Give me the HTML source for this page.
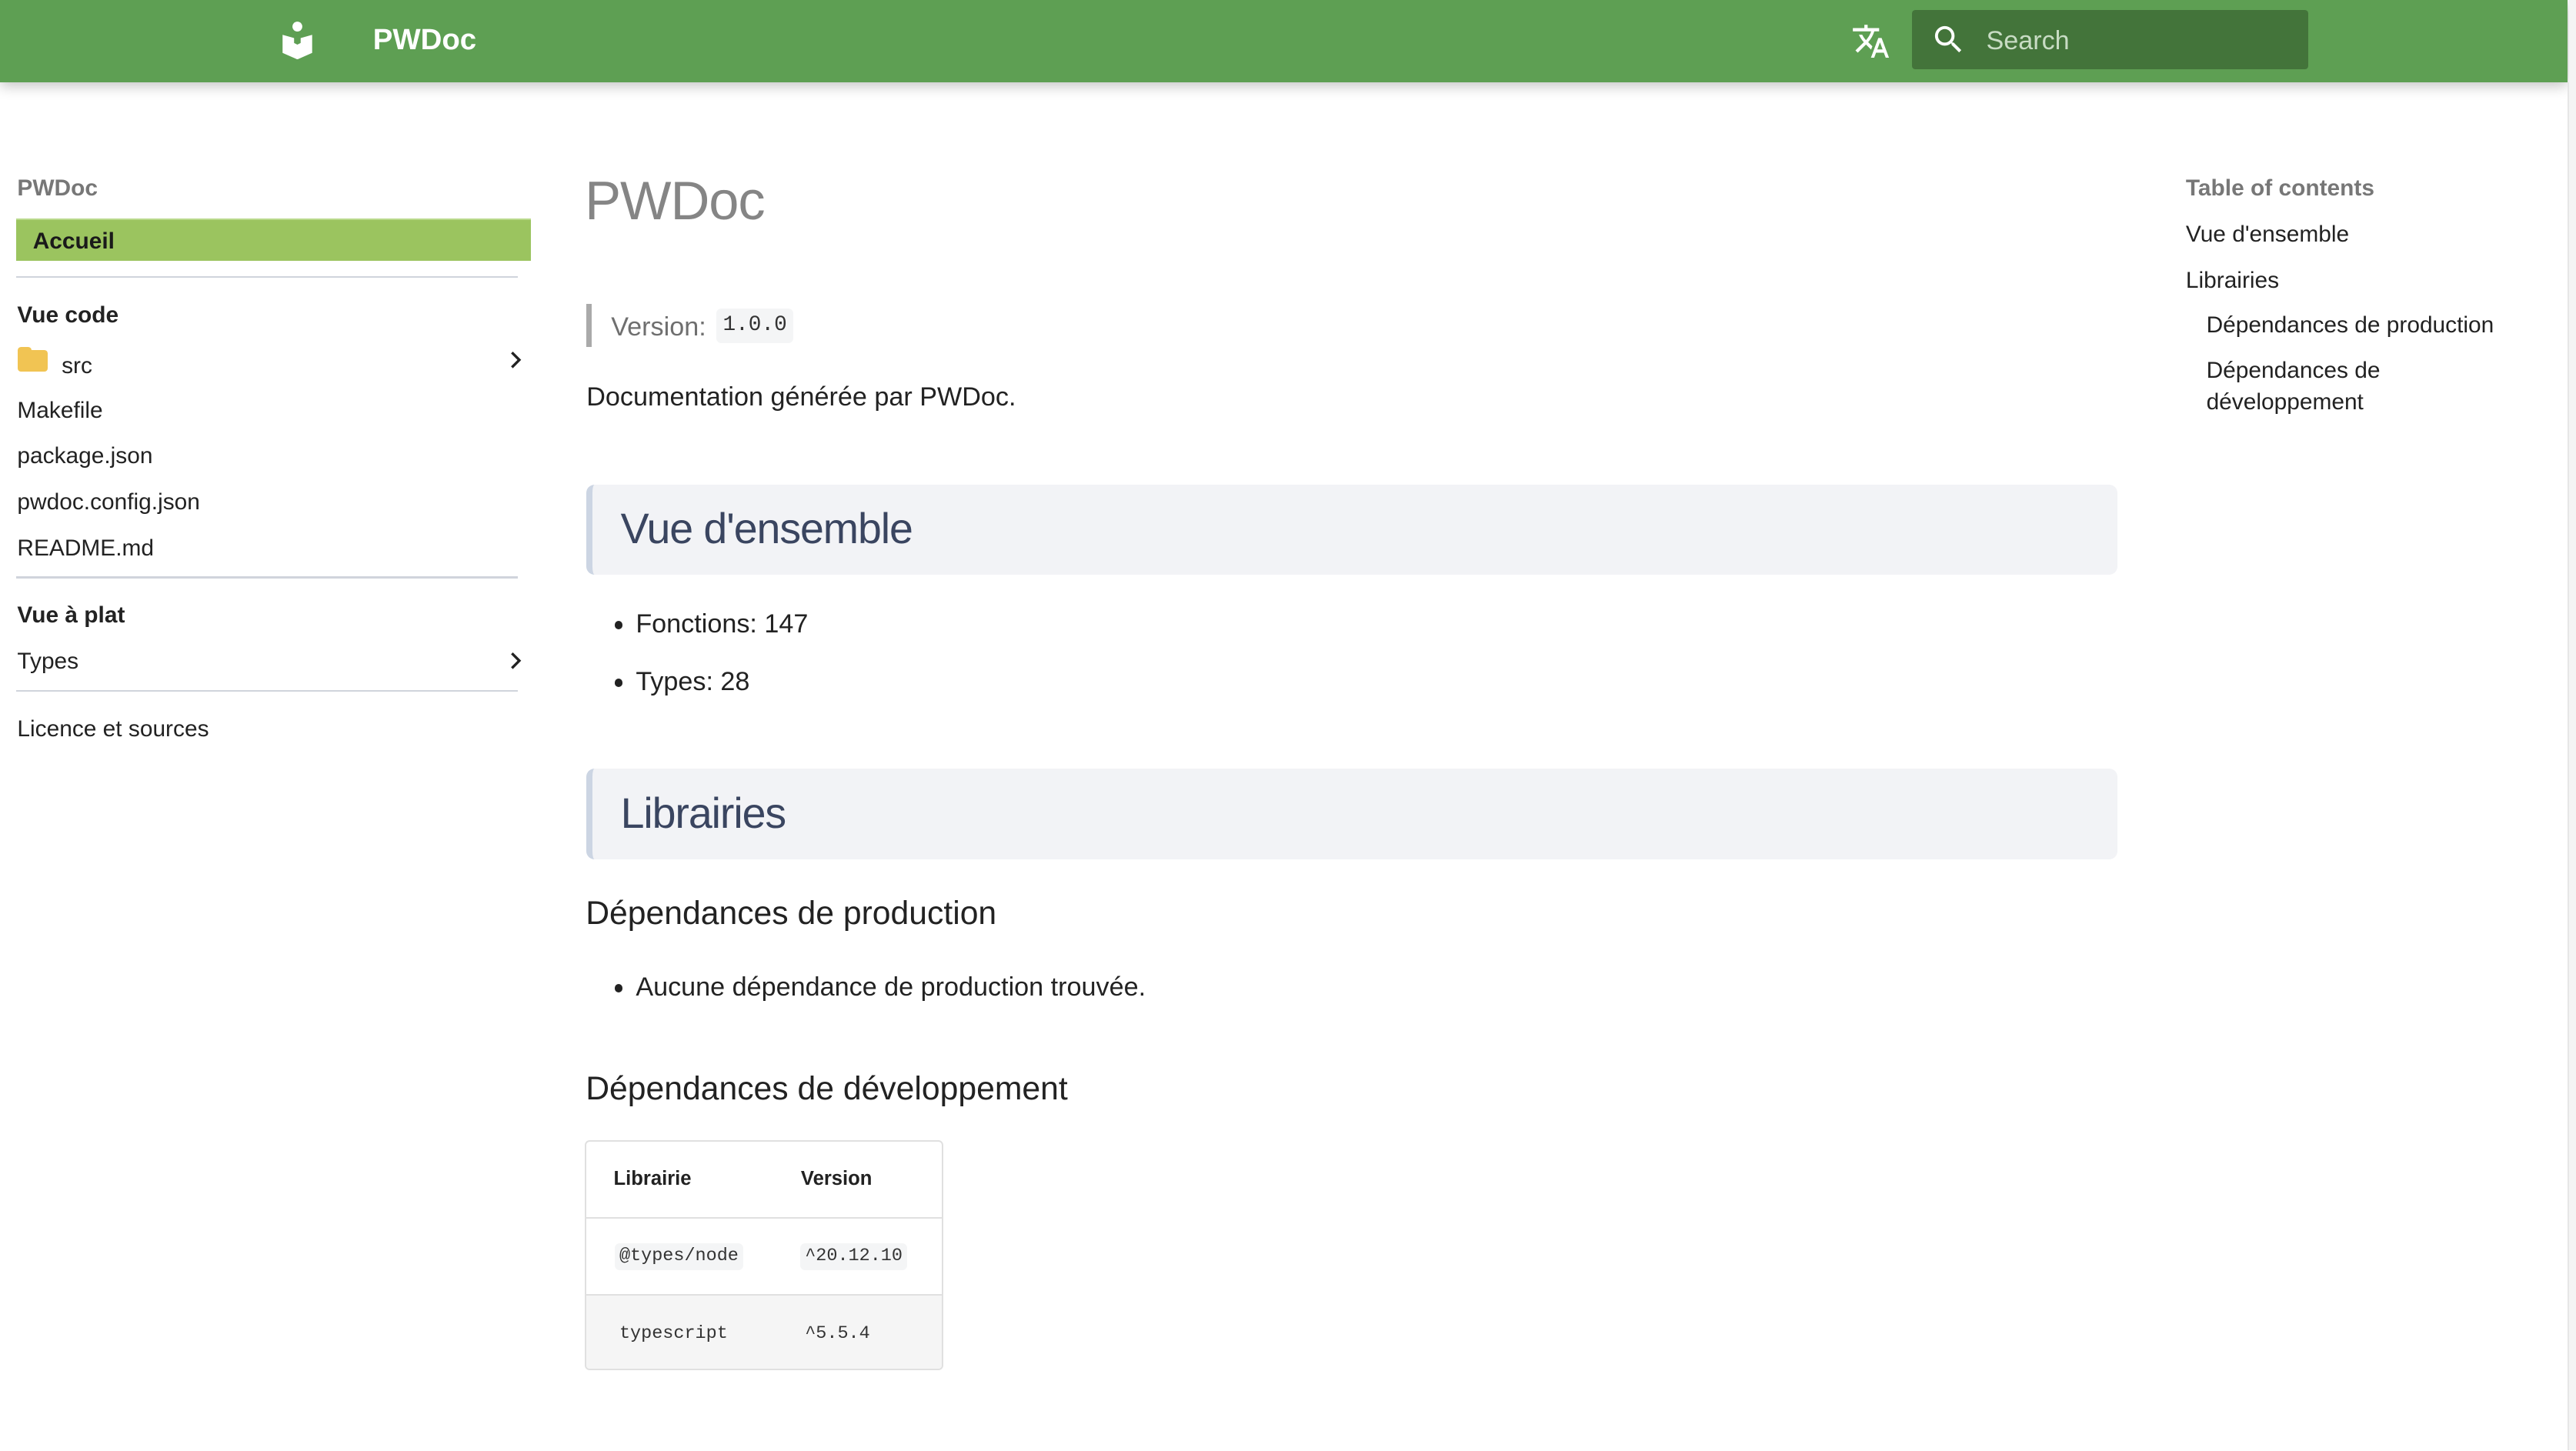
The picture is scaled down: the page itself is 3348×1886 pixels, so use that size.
<!DOCTYPE html>
<html><head><meta charset="utf-8"><style>
html{zoom:2.1352}
body{margin:0;width:1568px;height:883px;position:relative;overflow:hidden;background:#fff;font-family:"Liberation Sans",sans-serif;color:#222}
.a{position:absolute;white-space:nowrap}
.hdr{position:absolute;left:0;top:0;width:1563px;height:50px;background:#5e9f53;box-shadow:0 2px 8px rgba(0,0,0,.25)}
.sb{font-size:14px;line-height:18px}
.t{font-size:14px;line-height:18px;color:#222}
.line{position:absolute;left:10px;width:305px;height:1px;background:#d0d4dc}
.box{position:absolute;left:357px;width:932px;height:55px;background:#f2f3f6;border-left:4px solid #ccd5e3;border-radius:5px;box-sizing:border-box}
.box span{position:absolute;left:17px;top:12px;font-size:26px;font-weight:300;color:#3a4560;letter-spacing:-0.5px}
.li{font-size:16px;line-height:20px;color:#222}
.dot{position:absolute;width:5px;height:5px;border-radius:50%;background:#222}
.mono{font-family:"Liberation Mono",monospace;color:#333}
</style></head><body>
<div class="hdr">
 <svg class="a" style="left:170px;top:12px" width="22" height="24" viewBox="0 0 22 24"><circle cx="11" cy="4" r="3" fill="#fff"/><path d="M2 9 L9 11 L9 14 L11 15 L13 14 L13 11 L20 9 L20 20 L11 24 L2 20 Z" fill="#fff"/></svg>
 <div class="a" style="left:227px;top:14px;font-size:18px;font-weight:bold;color:#fff">PWDoc</div>
 <svg class="a" style="left:1127px;top:13px" width="24" height="24" viewBox="0 0 24 24"><path fill="#fff" d="M12.87 15.07l-2.54-2.51.03-.03A17.52 17.52 0 0 0 14.070 6H17V4h-7V2H8v2H1v2h11.17C11.5 7.92 10.44 9.75 9 11.35 8.07 10.32 7.3 9.19 6.69 8h-2c.73 1.63 1.730 3.17 2.98 4.56l-5.09 5.02L4 19l5-5 3.11 3.11.76-2.04zM18.5 10h-2L12 22h2l1.12-3h4.75L21 22h2l-4.5-12zm-2.62 7l1.62-4.33L19.12 17h-3.24z"/></svg>
 <div class="a" style="left:1164px;top:6px;width:241px;height:36px;background:#43743a;border-radius:2px"></div>
 <svg class="a" style="left:1175px;top:13px" width="22" height="22" viewBox="0 0 24 24"><path fill="#fff" d="M15.5 14h-.79l-.28-.27A6.47 6.47 0 0 0 16 9.5 6.5 6.5 0 1 0 9.5 16c1.61 0 3.09-.59 4.230-1.57l.27.28v.79l5 4.99L20.49 19l-4.99-5zm-6 0C7.01 14 5 11.99 5 9.5S7.01 5 9.5 5 14 7.01 14 9.5 11.99 14 9.5 14z"/></svg>
 <div class="a" style="left:1209px;top:16px;font-size:16px;color:#c8dcc4">Search</div>
</div>
<div class="a" style="left:1563px;top:50px;width:1px;height:833px;background:#e6e6e6"></div>
<div class="a" style="left:1564px;top:0;width:4px;height:883px;background:#f4f4f4"></div>

<div class="a sb" style="left:10.5px;top:106px;font-weight:bold;color:#777">PWDoc</div>
<div class="a" style="left:10px;top:133px;width:313px;height:26px;background:#9bc45f;border-top:1px solid #b9d98c;box-sizing:border-box"></div>
<div class="a sb" style="left:20px;top:138px;font-weight:bold;color:#1a1a1a">Accueil</div>
<div class="line" style="top:168px"></div>
<div class="a sb" style="left:10.5px;top:183px;font-weight:bold">Vue code</div>
<div class="a" style="left:11px;top:213px;width:18px;height:13px;background:#f1c453;border-radius:2px"></div>
<div class="a" style="left:11px;top:211px;width:8px;height:4px;background:#f1c453;border-radius:2px 2px 0 0"></div>
<div class="a t" style="left:37.5px;top:214px">src</div>
<svg class="a" style="left:309px;top:213px" width="10" height="12" viewBox="0 0 10 12"><path d="M2.5 1.5 L7 6 L2.5 10.5" stroke="#222" stroke-width="1.6" fill="none"/></svg>
<div class="a t" style="left:10.5px;top:241px">Makefile</div>
<div class="a t" style="left:10.5px;top:269px">package.json</div>
<div class="a t" style="left:10.5px;top:297px">pwdoc.config.json</div>
<div class="a t" style="left:10.5px;top:325px">README.md</div>
<div class="line" style="top:351px"></div>
<div class="a sb" style="left:10.5px;top:366px;font-weight:bold">Vue à plat</div>
<div class="a t" style="left:10.5px;top:394px">Types</div>
<svg class="a" style="left:309px;top:396px" width="10" height="12" viewBox="0 0 10 12"><path d="M2.5 1.5 L7 6 L2.5 10.5" stroke="#222" stroke-width="1.6" fill="none"/></svg>
<div class="line" style="top:420px"></div>
<div class="a t" style="left:10.5px;top:435px">Licence et sources</div>

<div class="a" style="left:356px;top:102px;font-size:33px;font-weight:300;color:#858585;line-height:40px;letter-spacing:-0.5px">PWDoc</div>
<div class="a" style="left:357px;top:185px;width:3px;height:26px;background:#aaa"></div>
<div class="a" style="left:372px;top:189px;font-size:16px;color:#6f6f6f;line-height:20px">Version:</div>
<div class="a mono" style="left:436px;top:188px;height:21px;padding:0 4px;background:#f4f5f6;border-radius:3px;font-size:13px;line-height:21px">1.0.0</div>
<div class="a li" style="left:357px;top:232px">Documentation générée par PWDoc.</div>
<div class="box" style="top:295px"><span>Vue d'ensemble</span></div>
<div class="dot" style="left:374px;top:378px"></div>
<div class="a li" style="left:387px;top:370px">Fonctions: 147</div>
<div class="dot" style="left:374px;top:413px"></div>
<div class="a li" style="left:387px;top:405px">Types: 28</div>
<div class="box" style="top:468px"><span>Librairies</span></div>
<div class="a" style="left:356.5px;top:544px;font-size:20px;color:#222;line-height:24px">Dépendances de production</div>
<div class="dot" style="left:374px;top:599px"></div>
<div class="a li" style="left:387px;top:591px">Aucune dépendance de production trouvée.</div>
<div class="a" style="left:356.5px;top:651px;font-size:20px;color:#222;line-height:24px">Dépendances de développement</div>
<div class="a" style="left:356px;top:694px;width:218px;height:140px;border:1px solid #e0e0e0;border-radius:3px;box-sizing:border-box;overflow:hidden">
 <div class="a" style="left:0;top:46px;width:218px;height:1px;background:#e0e0e0"></div>
 <div class="a" style="left:0;top:93px;width:218px;height:46px;background:#f5f5f5;border-top:1px solid #e0e0e0"></div>
</div>
<div class="a" style="left:373.5px;top:711px;font-size:12px;font-weight:bold;color:#222">Librairie</div>
<div class="a" style="left:487.5px;top:711px;font-size:12px;font-weight:bold;color:#222">Version</div>
<div class="a mono" style="left:374px;top:757px;padding:0 3px;background:#f4f5f6;border-radius:3px;font-size:11px;line-height:16px">@types/node</div>
<div class="a mono" style="left:487px;top:757px;padding:0 3px;background:#f4f5f6;border-radius:3px;font-size:11px;line-height:16px">^20.12.10</div>
<div class="a mono" style="left:374px;top:804px;padding:0 3px;font-size:11px;line-height:16px">typescript</div>
<div class="a mono" style="left:487px;top:804px;padding:0 3px;font-size:11px;line-height:16px">^5.5.4</div>

<div class="a sb" style="left:1330.5px;top:106px;font-weight:bold;color:#777">Table of contents</div>
<div class="a t" style="left:1330.5px;top:134px">Vue d'ensemble</div>
<div class="a t" style="left:1330.5px;top:162px">Librairies</div>
<div class="a t" style="left:1343px;top:189px">Dépendances de production</div>
<div class="a t" style="left:1343px;top:217px">Dépendances de</div>
<div class="a t" style="left:1343px;top:236px">développement</div>
</body></html>
